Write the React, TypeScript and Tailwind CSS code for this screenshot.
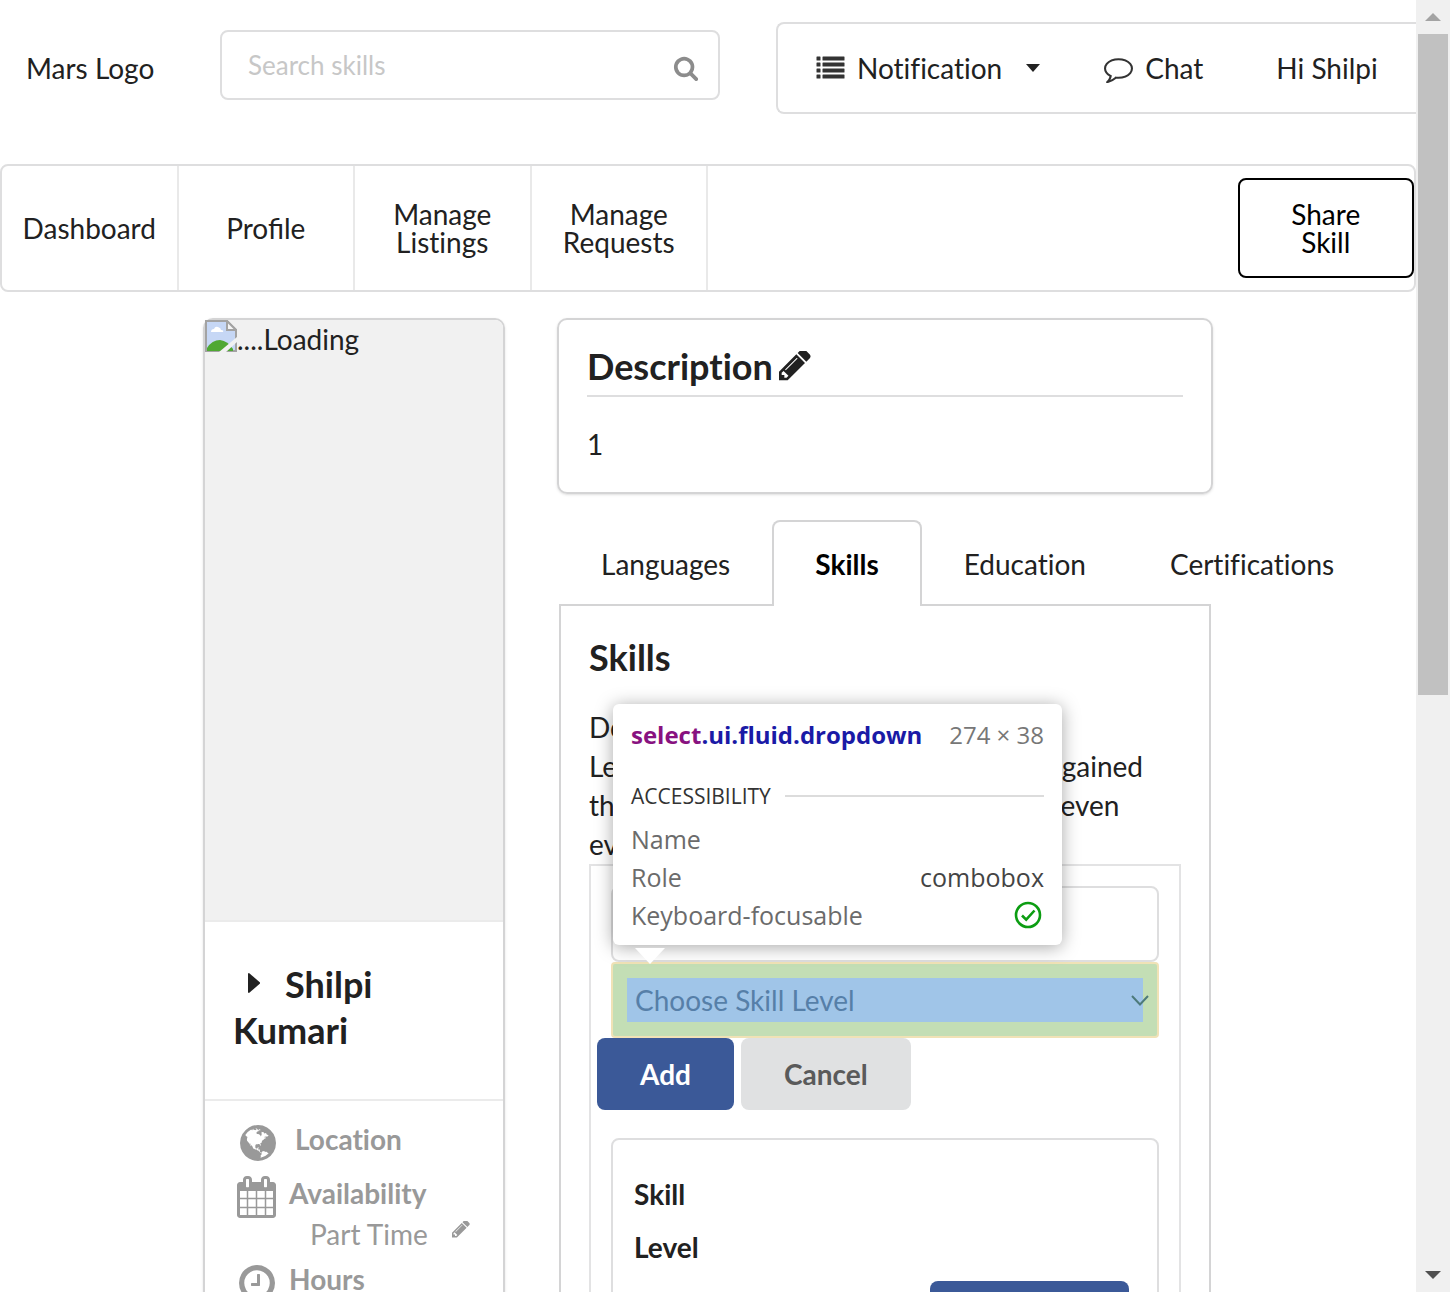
import React from "react";

type IconProps = { className?: string };

const SearchIcon = ({ className }: IconProps) => (
  <svg viewBox="0 0 1792 1792" className={className} fill="currentColor" aria-hidden="true">
    <path d="M1216 832q0-185-131.5-316.5t-316.5-131.5-316.5 131.5-131.5 316.5 131.5 316.5 316.5 131.5 316.5-131.5 131.5-316.5zm512 832q0 52-38 90t-90 38q-54 0-90-38l-343-342q-179 124-399 124-143 0-273.5-55.5t-225-150-150-225-55.5-273.5 55.5-273.5 150-225 225-150 273.5-55.5 273.5 55.5 225 150 150 225 55.5 273.5q0 220-124 399l343 343q37 37 37 90z" />
  </svg>
);

const ListIcon = ({ className }: IconProps) => (
  <svg viewBox="0 0 28 24" className={className} fill="currentColor" aria-hidden="true">
    {[0, 6, 12, 18].map((y) => (
      <g key={y}>
        <rect x="0" y={y + 0.5} width="4" height="4" rx="0.5" />
        <rect x="6" y={y + 0.5} width="22" height="4" rx="0.5" />
      </g>
    ))}
  </svg>
);

const CommentIcon = ({ className }: IconProps) => (
  <svg viewBox="0 0 1792 1792" className={className} fill="currentColor" aria-hidden="true">
    <path d="M896 384q-204 0-381.5 69.5t-282 187.5-104.5 255q0 112 71.5 213.5t201.5 175.5l87 50-27 96q-24 91-70 172 152-63 275-171l43-38 57 6q69 8 130 8 204 0 381.5-69.5t282-187.5 104.5-255-104.5-255-282-187.5-381.5-69.5zm896 512q0 174-120 321.5t-326 233-450 85.5q-70 0-145-8-198 175-460 242-49 14-114 22h-5q-15 0-27-10.5t-16-27.5v-1q-3-4-.5-12t2-10 4.5-9.5l6-9 7-8.5 8-9q7-8 31-34.5t34.5-38 31-39.5 32.5-51 27-59 26-76q-157-89-247.5-220t-90.5-281q0-174 120-321.5t326-233 450-85.5 450 85.5 326 233 120 321.5z" />
  </svg>
);

const PencilIcon = ({ className }: IconProps) => (
  <svg viewBox="128 256 1536 1536" className={className} fill="currentColor" aria-hidden="true">
    <path d="M491 1536l91-91-235-235-91 91v107h128v128h107zm523-928q0-22-22-22-10 0-17 7l-542 542q-7 7-7 17 0 22 22 22 10 0 17-7l542-542q7-7 7-17zm-54-192l416 416-832 832h-416v-416zm683 96q0 53-37 90l-166 166-416-416 166-165q36-38 90-38 53 0 91 38l235 234q37 39 37 91z" />
  </svg>
);

const GlobeIcon = ({ className }: IconProps) => (
  <svg viewBox="128 128 1536 1536" className={className} fill="currentColor" aria-hidden="true">
    <path d="M896 128q209 0 385.5 103t279.5 279.5 103 385.5-103 385.5-279.5 279.5-385.5 103-385.5-103-279.5-279.5-103-385.5 103-385.5 279.5-279.5 385.5-103zm274 521q-2 1-9.5 9.5t-13.5 9.5q2 0 4.5-5t5-11 3.5-7q6-7 22-15 14-6 52-12 34-8 51 11-2-2 9.5-13t14.5-12q3-2 15-4.5t15-7.5l2-22q-12 1-17.5-7t-6.5-21q0 2-6 8 0-7-4.5-8t-11.5 1-9 1q-10-3-15-7.5t-8-16.5-4-15q-2-5-9.5-11t-9.5-10q-1-2-2.5-5.5t-3-6.5-4-5.5-5.5-2.5-7 5-7.5 10-4.5 5q-3-2-6-1.5t-4.5 1-4.5 3-5 3.5q-3 2-8.5 3t-8.5 2q15-5-1-11-10-4-16-3 9-4 7.5-12t-8.5-14h5q-1-4-8.5-8.5t-17.5-8.5-13-6q-8-5-34-9.5t-33-.5q-5 6-4.5 10.5t4 14 3.5 12.5q1 6-5.5 13t-6.5 12q0 7 14 15.5t10 21.5q-3 8-16 16t-16 12q-5 8-1.5 18.5t10.5 16.5q2 2 1.5 4t-3.5 4.5-5.5 4-6.5 3.5l-3 2q-11 5-20.5-6t-13.5-26q-7-25-16-30-23-8-29 1-5-13-41-26-25-9-58-4 6-1 0-15-7-15-19-12 3-6 4-17.5t1-13.5q3-13 12-23 1-1 7-8.5t9.5-13.5.5-6q35 4 50-11 5-5 11.5-17t10.5-17q9-6 14-5.5t14.5 5.5 14.5 5q14 1 15.5-11t-7.5-20q12 1 3-17-4-7-8-9-12-4-27 5-8 4 2 8-1-1-9.5 10.5t-16.5 17.5-16-5q-1-1-5.5-13.5t-9.5-13.5q-8 0-16 15 3-8-11-15t-24-8q19-12-8-27-7-4-20.5-5t-19.5 4q-5 7-5.5 11.5t5 8 10.5 5.5 11.5 4 8.5 3q14 10 8 14-2 1-8.5 3.5t-11.5 4.5-6 4q-3 4 0 14t-2 14q-5-5-9-17.5t-7-16.5q7 9-25 6l-10-1q-4 0-16 2t-20.5 1-13.5-8q-4-8 0-20 1-4 4-2-4-3-11-9.5t-10-8.5q-46 15-94 41 6 1 12-1 5-2 13-6.5t10-5.5q34-14 42-7l5-5q14 16 20 25-7-4-30-1-20 6-22 12 7 12 5 18-4-3-11.5-10t-14.5-11-15-5q-16 0-22 1-146 80-235 222 7 7 12 8 4 1 5 9t2.5 11 11.5-3q9 8 3 19 1-1 44 27 19 17 21 21 3 11-10 18-1-2-9-9t-9-4q-3 5 .5 18.5t10.5 12.5q-7 0-9.5 16t-2.5 35.5-1 23.5l2 1q-3 12 5.5 34.5t21.5 19.5q-13 3 20 43 6 8 8 9 3 2 12 7.5t15 10 10 10.5q4 5 10 22.5t14 23.5q-2 6 9.5 20t10.5 23q-1 0-2.5 1t-2.5 1q3 7 15.5 14t15.5 13q1 3 2 10t3 11 8 2q2-20-24-62-15-25-17-29-3-5-5.5-15.5t-4.5-14.5q2 0 6 1.5t8.5 3.5 7.5 4 2 3q-3 7 2 17.5t12 18.5 17 19 12 13q6 6 14 19.5t0 13.5q9 0 20 10.5t17 19.5q5 8 8 26t5 24q2 7 8.5 13.5t12.5 9.5l16 8 13 7q5 2 18.5 10.5t21.5 11.5q10 4 16 4t14.5-2.5 13.5-3.5q15-2 29 15t21 21q36 19 55 11-2 1 .5 7.5t8 15.5 9 14.5 5.5 8.5q5 6 18 15t18 15q6-4 7-9-3 8 7 20t18 10q14-3 14-32-31 15-49-18 0-1-2.5-5.5t-4-8.5-2.5-8.5 0-7.5 5-3q9 0 10-3.5t-2-12.5-4-13q-1-8-11-20t-12-15q-5 9-16 8t-16-9q0 1-1.5 5.5t-1.5 6.5q-13 0-15-1 1-3 2.5-17.5t3.5-22.5q1-4 5.5-12t7.5-14.5 4-12.5-4.5-9.5-17.5-2.5q-19 1-26 20-1 3-3 10.5t-5 11.5-9 7q-7 3-24 2t-24-5q-13-8-22.5-29t-9.5-37q0-10 2.5-26.5t3-25-5.5-24.5q3-2 9-9.5t10-10.5q2-1 4.5-1.5t4.5 0 4-1.5 3-6q-1-1-4-3-3-3-4-3 7 3 28.5-1.5t27.5 1.5q15 11 22-2 0-1-2.5-9.5t-.5-13.5q5 27 29 9 3 3 15.5 5t17.5 5q3 2 7 5.5t5.5 4.5 5-.5 8.5-6.5q10 14 12 24 11 40 19 44 7 3 11 2t4.5-9.5 0-14-1.5-12.5l-1-8v-18l-1-8q-15-3-18.5-12t1.5-18.5 15-18.5q1-1 8-3.5t15.5-6.5 12.5-8q21-19 15-35 7 0 11-9-1 0-5-3t-7.5-5-4.5-2q9-5 2-16 5-3 7.5-11t7.5-10q9 12 21 2 7-8 1-16 5-7 20.5-10.5t18.5-9.5q7 2 8-2t1-12 3-12q4-5 15-9t13-5l17-11q3-4 0-4 18 2 31-11 10-11-6-20 3-6-3-9.5t-15-5.5q3-1 11.5-.5t10.5-1.5q15-10-7-16-17-5-43 12zm-163 877q206-36 351-189-3-3-12.5-4.5t-12.5-3.5q-18-7-24-8 1-7-2.5-13t-8-9-12.5-8-11-7q-2-2-7-6t-7-5.5-7.5-4.5-8.5-2-10 1l-3 1q-3 1-5.5 2.5t-5.5 3-4 3 0 2.5q-21-17-36-22-5-1-11-5.5t-10.5-7-10-1.5-11.5 7q-5 5-6 15t-2 13q-7-5 0-17.5t2-18.5q-3-6-10.5-4.5t-12 4.5-11.5 8.5-9 6.5-8.5 5.5-8.5 7.5q-3 4-6 12t-5 11q-2-4-11.5-6.5t-9.5-5.5q2 10 4 35t5 38q7 31-12 48-27 25-29 40-4 22 12 26 0 7-8 20.5t-7 21.5q0 6 2 16z" />
  </svg>
);

const CalendarIcon = ({ className }: IconProps) => (
  <svg viewBox="64 0 1664 1792" className={className} fill="currentColor" aria-hidden="true">
    <path d="M192 1664h288v-288h-288v288zm352 0h320v-288h-320v288zm-352-352h288v-320h-288v320zm352 0h320v-320h-320v320zm-352-384h288v-288h-288v288zm736 736h320v-288h-320v288zm-384-736h320v-288h-320v288zm768 736h288v-288h-288v288zm-384-352h320v-320h-320v320zm-352-864v-288q0-13-9.5-22.5t-22.5-9.5h-64q-13 0-22.5 9.5t-9.5 22.5v288q0 13 9.5 22.5t22.5 9.5h64q13 0 22.5-9.5t9.5-22.5zm736 864h288v-320h-288v320zm-384-384h320v-288h-320v288zm384 0h288v-288h-288v288zm32-480v-288q0-13-9.5-22.5t-22.5-9.5h-64q-13 0-22.5 9.5t-9.5 22.5v288q0 13 9.5 22.5t22.5 9.5h64q13 0 22.5-9.5t9.5-22.5zm384-64v1280q0 52-38 90t-90 38h-1408q-52 0-90-38t-38-90v-1280q0-52 38-90t90-38h128v-96q0-66 47-113t113-47h64q66 0 113 47t47 113v96h384v-96q0-66 47-113t113-47h64q66 0 113 47t47 113v96h128q52 0 90 38t38 90z" />
  </svg>
);

const ClockIcon = ({ className }: IconProps) => (
  <svg viewBox="128 128 1536 1536" className={className} fill="currentColor" aria-hidden="true">
    <path d="M1024 544v448q0 14-9 23t-23 9h-320q-14 0-23-9t-9-23v-64q0-14 9-23t23-9h224v-352q0-14 9-23t23-9h64q14 0 23 9t9 23zm416 352q0-148-73-273t-198-198-273-73-273 73-198 198-73 273 73 273 198 198 273 73 273-73 198-198 73-273zm224 0q0 209-103 385.5t-279.5 279.5-385.5 103-385.5-103-279.5-279.5-103-385.5 103-385.5 279.5-279.5 385.5-103 385.5 103 279.5 279.5 103 385.5z" />
  </svg>
);

const BrokenImageIcon = ({ className }: IconProps) => (
  <svg viewBox="0 0 32 32" className={className} aria-hidden="true">
    <path d="M1 1h21l9 9v21H1z" fill="#c6d7f5" stroke="#a3a3a3" strokeWidth="2" />
    <path d="M22 1v9h9z" fill="#f5f5f5" stroke="#a3a3a3" strokeWidth="2" />
    <path d="M6 12q0-3 3-3 1-3 4-2 3 1 3 3 3 0 2 2z" fill="#fff" />
    <path d="M2 28q5-8 13-8 8 1 13 9v2H2z" fill="#4fa833" />
    <path d="M14 32L32 17v5L21 32z" fill="#f1f1f1" />
  </svg>
);

const CheckIcon = ({ className }: IconProps) => (
  <svg viewBox="0 0 28 28" className={className} fill="none" stroke="#0c9d12" strokeWidth="2.6" aria-hidden="true">
    <circle cx="14" cy="14" r="12" />
    <path d="M8 14.5l4.2 4.2L20.5 9.5" />
  </svg>
);

function Header() {
  return (
    <header className="flex h-[164px] items-start pt-[22px]">
      <a href="#home" className="w-[220px] shrink-0 pl-[26px] leading-[92px]">
        Mars Logo
      </a>
      <div className="relative mt-2 w-[500px] shrink-0">
        <input
          type="text"
          aria-label="Search skills"
          placeholder="Search skills"
          className="block h-[70px] w-full rounded-lg border-2 border-[#dededf] pr-16 pl-[26px] text-[26px] outline-none placeholder:text-[#c7c7c7]"
        />
        <SearchIcon className="absolute top-[25px] right-[21px] size-[26px] text-[#8c8c8c]" />
      </div>
      <nav className="ml-14 flex h-[92px] flex-1 items-center rounded-l-lg border-2 border-r-0 border-[#dededf] pl-[38px] whitespace-nowrap">
        <button type="button" className="flex items-center [font-variant-ligatures:none]">
          <ListIcon className="mr-3 h-6 w-[29px] text-[#333]" />
          Notification
          <svg viewBox="0 0 14 8" className="ml-6 h-2 w-[14px]" fill="#222" aria-hidden="true">
            <path d="M0 0h14L7 8z" />
          </svg>
        </button>
        <a href="#chat" className="ml-16 flex items-center">
          <CommentIcon className="mr-3 size-[29px] text-[#333]" />
          Chat
        </a>
        <a href="#me" className="ml-[73px]">
          Hi Shilpi
        </a>
      </nav>
    </header>
  );
}

function MainNav() {
  return (
    <nav className="grid h-32 grid-cols-8 rounded-lg border-2 border-[#dededf] text-center leading-7">
      {["Dashboard", "Profile", "Manage Listings", "Manage Requests"].map((label) => (
        <a
          key={label}
          href="#section"
          className={
            label === "Profile"
              ? "flex items-center justify-center border-r-2 border-[#e9e9e9] px-5"
              : "flex items-center justify-center border-r-2 border-[#e9e9e9] px-5 [font-variant-ligatures:none]"
          }
        >
          {label}
        </a>
      ))}
      <button
        type="button"
        className="col-start-8 h-[100px] self-center rounded-lg border-2 border-black px-10 text-black"
      >
        Share Skill
      </button>
    </nav>
  );
}

function ProfileCard() {
  return (
    <aside className="min-h-[1100px] rounded-[10px] border-2 border-[#d4d4d5] shadow-sm">
      <div className="flex h-[600px] items-start rounded-t-lg bg-[#f1f1f1]">
        <BrokenImageIcon className="size-8" />
        <span className="leading-[38px]">....Loading</span>
      </div>
      <h2 className="border-y-2 border-[#ebebeb] px-7 pt-[39px] pb-[46px] text-4xl leading-[46px] font-bold">
        <svg viewBox="0 0 12 20" className="mr-[25px] ml-[15px] inline h-5 w-3 -translate-y-1.5" fill="currentColor" aria-hidden="true">
          <path d="M0 0.500L1 0l11 9.500v1L1 20l-1-.5z" />
        </svg>
        Shilpi Kumari
      </h2>
      <ul className="pt-5 pl-8 leading-9 text-[#999] [font-variant-ligatures:none]">
        <li className="flex h-[54px] items-start">
          <GlobeIcon className="mt-1 ml-[3px] size-9" />
          <b className="ml-[19px]">Location</b>
        </li>
        <li className="flex h-[86px] items-start">
          <CalendarIcon className="mt-[1px] h-[42px] w-[39px]" />
          <div className="ml-[13px]">
            <b className="block h-10">Availability</b>
            <div className="flex items-center pl-[21px] leading-[38px]">
              Part Time
              <button type="button" aria-label="Edit availability" className="mb-2 ml-6">
                <PencilIcon className="size-[18px]" />
              </button>
            </div>
          </div>
        </li>
        <li className="flex items-start">
          <ClockIcon className="mt-1 ml-[2px] size-9" />
          <b className="ml-[14px]">Hours</b>
        </li>
      </ul>
    </aside>
  );
}

function DescriptionCard() {
  return (
    <section className="rounded-[10px] border-2 border-[#d4d4d5] px-7 pt-6 pb-7 shadow-sm">
      <h2 className="flex items-center border-b-2 border-[#dededf] pb-[6px] text-4xl leading-[45px] font-bold [font-variant-ligatures:none]">
        Description
        <button type="button" aria-label="Edit description" className="ml-[6px]">
          <PencilIcon className="size-8" />
        </button>
      </h2>
      <p className="pt-[27px] leading-10">1</p>
    </section>
  );
}

const idleTab = "border-2 border-b-0 border-transparent px-10";
const activeTab = "rounded-t-lg border-2 border-b-0 border-[#d4d4d5] bg-white px-[41px] font-bold text-black";

function Tabs() {
  return (
    <div
      role="tablist"
      className="relative -mb-[2px] flex h-[86px] px-[2px] whitespace-nowrap [font-variant-ligatures:none]"
    >
      {["Languages", "Skills", "Education", "Certifications"].map((label) => (
        <button
          key={label}
          type="button"
          role="tab"
          aria-selected={label === "Skills"}
          className={label === "Skills" ? activeTab : idleTab}
        >
          {label}
        </button>
      ))}
    </div>
  );
}

function InspectorTooltip() {
  return (
    <div
      role="tooltip"
      className="absolute bottom-full left-0 mb-[19px] w-[449px] rounded-md bg-white px-[18px] pt-3 pb-[11px] font-['Open_Sans',sans-serif] text-[25px] leading-[38px] text-[#6b6b6b] shadow-[0_2px_18px_rgba(0,0,0,0.35)]"
    >
      <div className="flex items-center justify-between text-2xl leading-[38px] whitespace-nowrap">
        <span className="font-bold text-[#1a1aa6]">
          <span className="text-[#881280]">select</span>.ui.fluid.dropdown
        </span>
        <span className="text-[#777]">274 × 38</span>
      </div>
      <div className="mt-[23px] flex items-center gap-[14px] text-[21px] font-medium text-[#333]">
        ACCESSIBILITY
        <span className="h-[2px] flex-1 bg-[#dcdcdc]" />
      </div>
      <div className="mt-[5px]">Name</div>
      <div className="flex justify-between">
        Role<span className="text-[#444]">combobox</span>
      </div>
      <div className="flex items-center justify-between pr-[2px]">
        Keyboard-focusable
        <CheckIcon className="size-7" />
      </div>
      <svg viewBox="0 0 30 16" className="absolute top-full left-[22px] mt-[3px] h-4 w-[30px]" fill="#fff" aria-hidden="true">
        <path d="M0 0h30L15 16z" />
      </svg>
    </div>
  );
}

function SkillsPanel() {
  return (
    <section className="mx-[2px] min-h-[800px] border-2 border-[#d4d4d5] px-7 pt-7">
      <h2 className="text-4xl leading-[46px] font-bold">Skills</h2>
      <p className="mt-7 leading-[39px] whitespace-nowrap">
        Do you have any skills?
        <br />
        Let people know which skills you have gained
        <br />
        through working, studying, a hobby or even
        <br />
        everyday life
      </p>
      <div className="min-h-[500px] border-2 border-[#e3e3e4] px-5 pt-5">
        <input
          type="text"
          aria-label="Skill name"
          className="block h-[76px] w-full rounded-lg border-2 border-[#dededf] px-6 outline-none"
        />
        <div className="relative rounded-sm border-2 border-[#f0e2b6] bg-[#c3deb5] p-[14px]">
          <select
            aria-label="Skill level"
            className="block h-11 w-full appearance-none bg-[#a0c5e8] pl-2 text-[#567fa8] outline-none"
          >
            <option>Choose Skill Level</option>
          </select>
          <svg viewBox="0 0 18 11" className="absolute top-[31px] right-2 h-[11px] w-[18px]" fill="none" stroke="#4d7a7a" strokeWidth="2" aria-hidden="true">
            <path d="M1 1l8 8.500L17 1" />
          </svg>
          <InspectorTooltip />
        </div>
        <div className="-ml-[14px] flex gap-[7px] font-bold">
          <button type="button" className="h-[72px] rounded-lg bg-[#3b5998] px-[43px] text-white">
            Add
          </button>
          <button type="button" className="h-[72px] rounded-lg bg-[#e0e1e2] px-[43px] text-[#5a5a5a]">
            Cancel
          </button>
        </div>
        <div className="mt-7 min-h-[300px] rounded-lg border-2 border-[#dededf] px-[21px] pt-7">
          <table className="w-full text-left">
            <thead>
              <tr className="block h-[53px] leading-[53px]">
                <th>Skill</th>
              </tr>
              <tr className="block h-[53px] leading-[53px]">
                <th>Level</th>
              </tr>
            </thead>
          </table>
          <button type="button" className="mt-[7px] mr-[7px] ml-auto block h-[72px] w-[199px] rounded-lg bg-[#3b5998] font-bold text-white">
            Add New
          </button>
        </div>
      </div>
    </section>
  );
}

function ScrollBar() {
  return (
    <div aria-hidden="true" className="flex w-[34px] shrink-0 flex-col bg-[#f0f0f0]">
      <div className="flex h-[34px] shrink-0 items-center justify-center">
        <svg viewBox="0 0 16 8" className="h-2 w-4" fill="#a3a3a3">
          <path d="M0 8h16L8 0z" />
        </svg>
      </div>
      <div className="min-h-0 flex-1">
        <div className="mx-[2px] h-[54%] bg-[#c1c1c1]" />
      </div>
      <div className="flex h-[34px] shrink-0 items-center justify-center">
        <svg viewBox="0 0 16 8" className="h-2 w-4" fill="#505050">
          <path d="M0 0h16L8 8z" />
        </svg>
      </div>
    </div>
  );
}

export default function App() {
  return (
    <div className="flex h-screen overflow-hidden bg-white font-['Lato',sans-serif] text-[28px] leading-10 text-[#212121]">
      <div className="min-w-0 flex-1 overflow-hidden">
        <Header />
        <MainNav />
        <main className="mx-auto mt-[26px] grid w-full max-w-[1010px] grid-cols-[302px_minmax(0,1fr)] items-start gap-x-13">
          <ProfileCard />
          <div>
            <DescriptionCard />
            <div className="mt-[26px]">
              <Tabs />
              <SkillsPanel />
            </div>
          </div>
        </main>
      </div>
      <ScrollBar />
    </div>
  );
}
